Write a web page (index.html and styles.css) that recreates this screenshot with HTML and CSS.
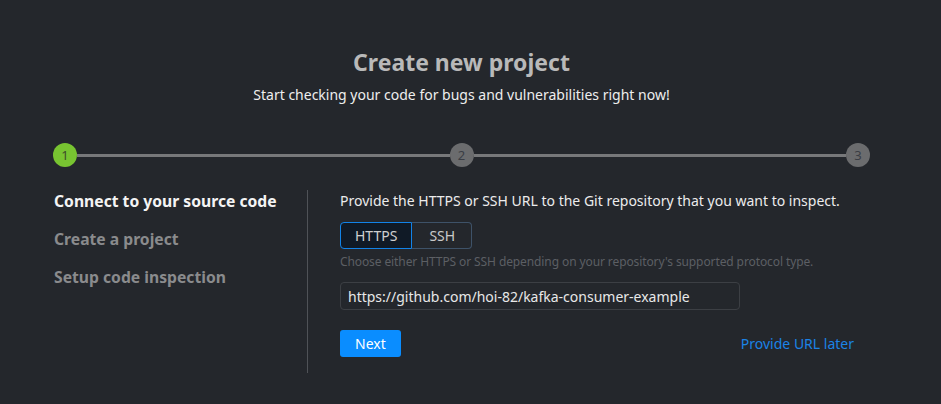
FILE: index.html
```html
<!DOCTYPE html>
<html lang="en">
<head>
    <meta charset="UTF-8">
    <title>Create new project</title>
    <link rel="stylesheet" href="styles.css">
</head>
<body>
    <div class="page">
        <div class="header">
            <h1 class="title">Create new project</h1>
            <p class="subtitle">Start checking your code for bugs and vulnerabilities right now!</p>
        </div>

        <div class="stepper">
            <span class="dot done">1</span>
            <span class="bar"></span>
            <span class="dot">2</span>
            <span class="bar"></span>
            <span class="dot">3</span>
        </div>

        <div class="content">
            <ul class="steps">
                <li class="active">Connect to your source code</li>
                <li>Create a project</li>
                <li>Setup code inspection</li>
            </ul>

            <div class="panel">
                <p class="lead">Provide the HTTPS or SSH URL to the Git repository that you want to inspect.</p>
                <div class="toggle">
                    <button class="selected">HTTPS</button>
                    <button>SSH</button>
                </div>
                <p class="hint">Choose either HTTPS or SSH depending on your repository's supported protocol type.</p>
                <input class="url" type="text" value="https://github.com/hoi-82/kafka-consumer-example">
                <div class="actions">
                    <button class="next">Next</button>
                    <a href="#" class="later">Provide URL later</a>
                </div>
            </div>
        </div>
    </div>
</body>
</html>
```

FILE: styles.css
```css
/* Page */
body {
    margin: 0;
    background: #24272c;
    font-family: "Noto Sans", "Open Sans", sans-serif;
    color: #e6e6e6;
}

.page {
    width: 817px;
    margin-left: 53px;
    padding-top: 45px;
}

.header {
    text-align: center;
}
.title {
    margin: 0;
    font-size: 23px;
    line-height: 34px;
    font-weight: bold;
    color: #b9b9b9;
}
.subtitle {
    margin: 6px 0 0;
    font-size: 14px;
    line-height: 20px;
    color: #eeeeee;
}

/* Stepper */
.stepper {
    display: flex;
    align-items: center;
    margin-top: 38px;
}
.dot {
    width: 24px;
    height: 24px;
    border-radius: 50%;
    background: #6b6c6e;
    color: #3a3d44;
    font-size: 13px;
    line-height: 24px;
    text-align: center;
    flex-shrink: 0;
}
.dot.done {
    background: #78c431;
    color: #3d4a2a;
}
.bar {
    flex: 1;
    height: 3px;
    background: #77787a;
}

/* Body */
.content {
    display: flex;
    margin-top: 23px;
}
.steps {
    list-style: none;
    margin: 0;
    padding: 0 0 0 1px;
    width: 253px;
    border-right: 1px solid #4f5257;
    height: 183px;
}
.steps li {
    font-size: 15.7px;
    font-weight: bold;
    line-height: 22px;
    color: #8a8b8d;
    margin-bottom: 16px;
}
.steps li.active {
    color: #f4f4f4;
}

.panel {
    flex: 1;
    padding-left: 32px;
    padding-right: 16px;
}
.lead {
    margin: 1px 0 0;
    font-size: 14px;
    line-height: 20px;
    color: #ececec;
}
.toggle {
    display: flex;
    margin-top: 11px;
}
.toggle button {
    font-family: inherit;
    font-size: 14px;
    height: 27px;
    padding: 0 16px 0 17px;
    background: transparent;
    color: #c9c9c9;
    border: 1px solid #3e5268;
    border-left: none;
    border-radius: 0 4px 4px 0;
    cursor: pointer;
}
.toggle button.selected {
    padding: 0 14px;
    background: #101a26;
    border: 1px solid #1283e8;
    border-radius: 4px 0 0 4px;
    color: #d0d0d0;
}
.hint {
    margin: 5px 0 0;
    font-size: 12px;
    line-height: 16px;
    letter-spacing: -0.1px;
    color: #5c5f64;
}
.url {
    display: block;
    margin-top: 12px;
    width: 400px;
    height: 28px;
    box-sizing: border-box;
    padding: 0 7px;
    background: transparent;
    border: 1px solid #3c3f44;
    border-radius: 4px;
    font-family: inherit;
    font-size: 14px;
    color: #e8e8e8;
}

.actions {
    display: flex;
    justify-content: space-between;
    align-items: center;
    margin-top: 20px;
}
.next {
    height: 27px;
    padding: 0 15px;
    background: #0a8dff;
    color: #ffffff;
    border: none;
    border-radius: 3px;
    font-family: inherit;
    font-size: 14px;
    cursor: pointer;
}
.later {
    font-size: 14px;
    color: #1b83e6;
    text-decoration: none;
}
```
